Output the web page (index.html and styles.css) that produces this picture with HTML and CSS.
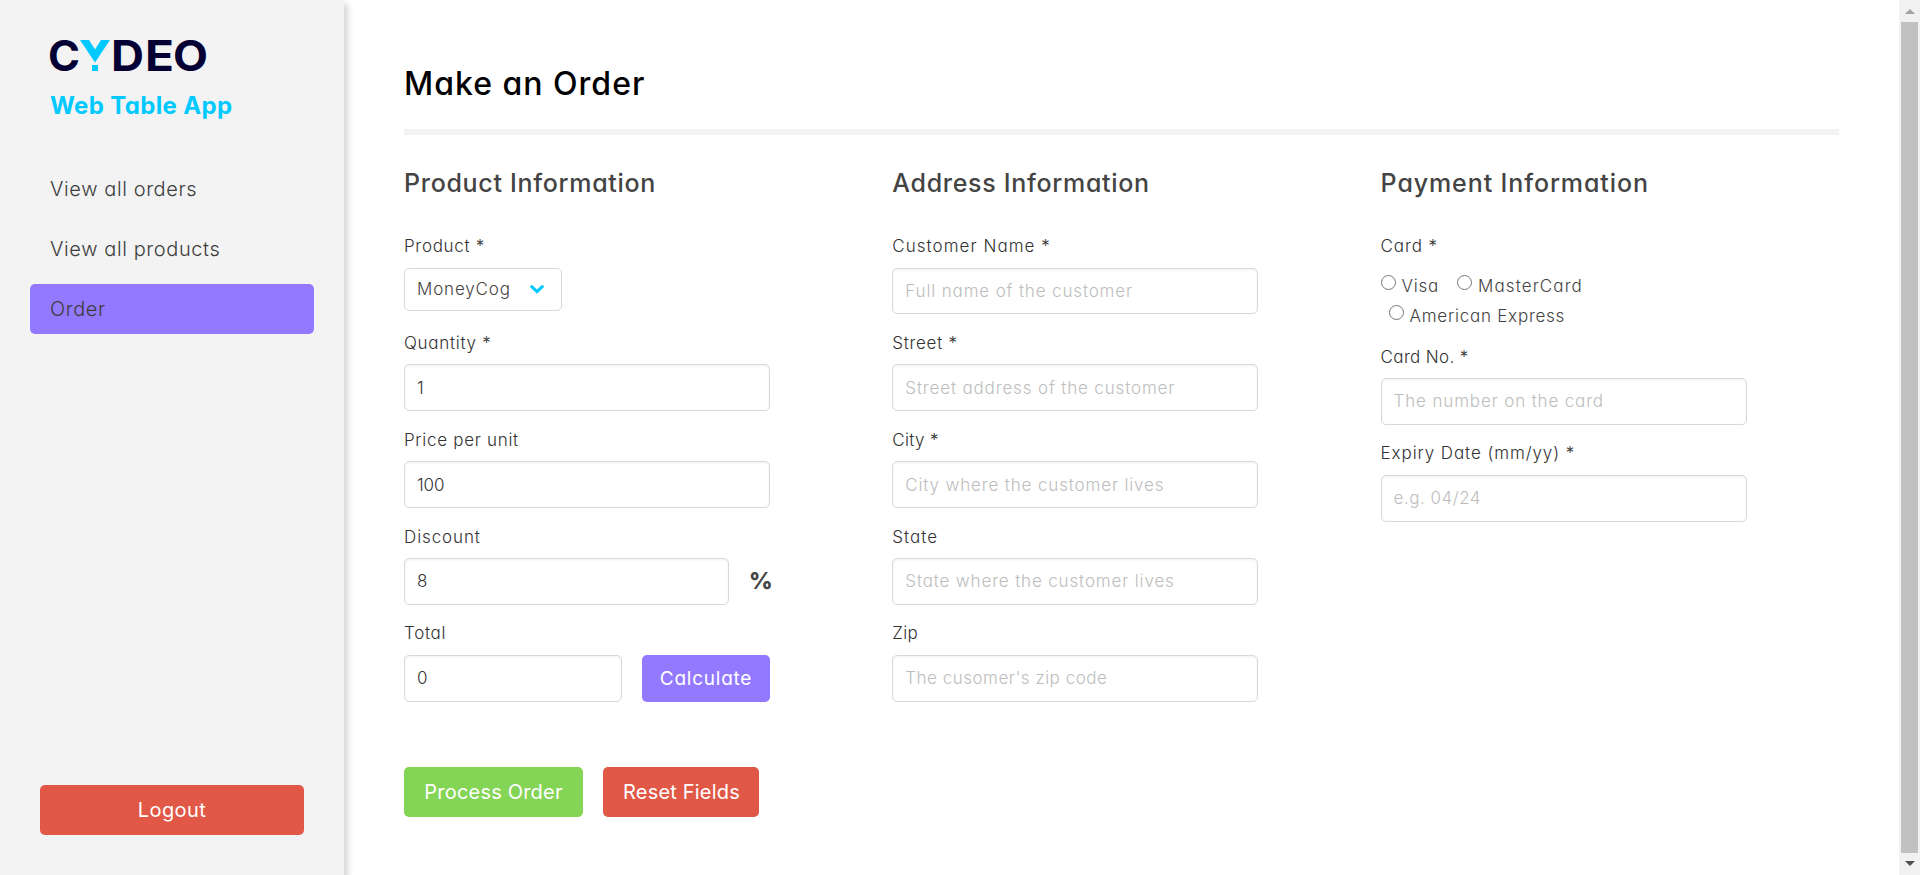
FILE: index.html
```
<!DOCTYPE html>
<html lang="en">
<head>
<meta charset="utf-8">
<title>Web Table App</title>
<link rel="stylesheet" href="styles.css">
</head>
<body>
<div class="app">
  <aside class="sidebar">
    <svg class="logo" viewBox="0 0 157 31" aria-label="Cydeo">
      <g class="logo-text">
        <text x="-2" y="30.5" textLength="32" lengthAdjust="spacingAndGlyphs">C</text>
        <text x="61" y="30.5" textLength="33" lengthAdjust="spacingAndGlyphs">D</text>
        <text x="95" y="30.5" textLength="29" lengthAdjust="spacingAndGlyphs">E</text>
        <text x="123" y="30.5" textLength="35" lengthAdjust="spacingAndGlyphs">O</text>
      </g>
      <g class="logo-mark">
        <path d="M30 0h9l6 9.500 6-9.500h9L45 22.500z"/>
        <rect x="42" y="25" width="6" height="6"/>
      </g>
    </svg>
    <p class="subtitle">Web Table App</p>
    <nav class="menu">
      <a class="menu-link">View all orders</a>
      <a class="menu-link">View all products</a>
      <a class="menu-link active">Order</a>
    </nav>
    <button class="button danger logout">Logout</button>
  </aside>

  <main class="main">
    <h1 class="title">Make an Order</h1>
    <div class="columns">
      <section class="column">
        <h2 class="heading">Product Information</h2>
        <div class="field"><label class="label">Product *</label>
          <div class="select"><span>MoneyCog</span><svg class="chevron" viewBox="0 0 14 9"><path d="M1.700 1.700L7 6.700l5.300-5"/></svg></div></div>
        <div class="field"><label class="label">Quantity *</label><input class="input number" value="1"></div>
        <div class="field"><label class="label">Price per unit</label><input class="input number" value="100"></div>
        <div class="field"><label class="label snug">Discount</label>
          <div class="row"><input class="input number" value="8"><strong class="percent">%</strong></div></div>
        <div class="field"><label class="label">Total</label>
          <div class="row"><input class="input number" value="0"><button class="button calculate">Calculate</button></div></div>
      </section>

      <section class="column">
        <h2 class="heading">Address Information</h2>
        <div class="field"><label class="label wide">Customer Name *</label><input class="input" placeholder="Full name of the customer"></div>
        <div class="field"><label class="label">Street *</label><input class="input" placeholder="Street address of the customer"></div>
        <div class="field"><label class="label tight">City *</label><input class="input" placeholder="City where the customer lives"></div>
        <div class="field"><label class="label wide">State</label><input class="input" placeholder="State where the customer lives"></div>
        <div class="field"><label class="label tight">Zip</label><input class="input tight" placeholder="The cusomer's zip code"></div>
      </section>

      <section class="column">
        <h2 class="heading payment">Payment Information</h2>
        <div class="cards"><label class="label snug">Card *</label>
          <div class="options">
            <label class="option"><input type="radio" class="radio" name="card">Visa</label>
            <label class="option mastercard"><input type="radio" class="radio" name="card">MasterCard</label>
            <label class="option amex"><input type="radio" class="radio" name="card">American Express</label>
          </div></div>
        <div class="field"><label class="label tight">Card No. *</label><input class="input" placeholder="The number on the card"></div>
        <div class="field"><label class="label snug">Expiry Date (mm/yy) *</label><input class="input tight" placeholder="e.g. 04/24"></div>
      </section>
    </div>
    <div class="actions">
      <button class="button success">Process Order</button>
      <button class="button danger reset">Reset Fields</button>
    </div>
  </main>

  <div class="scrollbar">
    <svg class="arrow up" viewBox="0 0 10 5"><path d="M0 5L5 0l5 5z"/></svg>
    <div class="thumb"></div>
    <svg class="arrow down" viewBox="0 0 10 5"><path d="M0 0h10L5 5z"/></svg>
  </div>
</div>
</body>
</html>
```
FILE: styles.css
```
* { box-sizing: border-box; margin: 0; }

body {
  background: #fff;
  color: #444;
  font-family: Inter, "Open Sans", sans-serif;
  font-size: 17px;
  font-weight: 300;
  font-feature-settings: "cv11";
  overflow: hidden;
}

input, button { font: inherit; font-feature-settings: inherit; color: inherit; }

.app { display: flex; height: 875px; }

/* Sidebar */
.sidebar {
  display: flex;
  flex-direction: column;
  width: 344px;
  padding: 40px 30px;
  background: #f3f3f3;
  box-shadow: 4px 4px 6px rgba(0, 0, 0, .16);
}
.logo { width: 157px; height: 31px; margin-left: 20px; overflow: visible; }
.logo-text { fill: #040033; font-size: 42px; font-weight: 750; }
.logo-mark { fill: #00c9ff; }
.subtitle {
  margin: 17px 0 0 20px;
  color: #00c9ff;
  font-size: 24px;
  font-weight: 750;
  line-height: 36px;
  letter-spacing: .35px;
}
.menu { display: flex; flex-direction: column; gap: 10px; margin-top: 40px; }
.menu-link {
  height: 50px;
  padding: 0 20px;
  border-radius: 5px;
  color: #3d3d3d;
  font-size: 20px;
  line-height: 50px;
  letter-spacing: .6px;
}
.menu-link.active { background: #9379ff; }

/* Buttons */
.button {
  height: 50px;
  padding: 0 20px;
  border: 0;
  border-radius: 5px;
  color: #fff;
  font-size: 20px;
  font-weight: 400;
  line-height: 50px;
  letter-spacing: .2px;
  white-space: nowrap;
}
.danger { background: #e15847; }
.success { width: 179px; background: #84d456; }
.reset { width: 156px; }
.logout { margin: auto 10px 0; letter-spacing: .4px; }
.calculate {
  flex: none;
  width: 128px;
  height: auto;
  padding: 0;
  background: #9379ff;
  font-size: 19px;
  line-height: 45px;
  letter-spacing: .75px;
}

/* Main */
.main { flex: 1; padding: 60px 60px 0; }
.title {
  padding-bottom: 21px;
  border-bottom: 6px solid #f3f3f3;
  color: #000;
  font-size: 32px;
  font-weight: 450;
  line-height: 48px;
  letter-spacing: 1px;
}
.columns { display: grid; grid-template-columns: repeat(3, 366px); gap: 122.3px; margin-top: 29px; }
.heading {
  margin-bottom: 15.5px;
  font-size: 25px;
  font-weight: 450;
  line-height: 38px;
  letter-spacing: .7px;
}
.heading.payment { letter-spacing: .9px; }
.field { height: 96.85px; }
.label {
  display: block;
  height: 50px;
  padding-top: 16.5px;
  color: #333;
  line-height: 24px;
  letter-spacing: .7px;
}
.label.tight { letter-spacing: .35px; }
.label.snug { letter-spacing: .9px; }
.label.wide { letter-spacing: 1.05px; }
.input, .select {
  display: block;
  width: 100%;
  height: 46.85px;
  padding: 0 12px;
  border: 1px solid #d9d9d9;
  border-radius: 5px;
  background: #fff;
  box-shadow: inset 0 1px 3px rgba(0, 0, 0, .06);
  letter-spacing: .85px;
}
.input.tight { letter-spacing: .5px; }
.input.number { color: #333; letter-spacing: -.1px; }
.input::placeholder { color: #bdbdbd; opacity: 1; }
.select {
  display: flex;
  align-items: center;
  justify-content: space-between;
  width: 158px;
  height: 43px;
  padding: 0 17px 0 12px;
  box-shadow: none;
}
.chevron { width: 14px; height: 9px; fill: none; stroke: #00c9ff; stroke-width: 3; stroke-linecap: round; }
.row { display: flex; gap: 20px; }
.row .input { flex: 1; min-width: 0; }
.percent { width: 21px; font-size: 23px; font-weight: 800; line-height: 47px; }

/* Card choice */
.options { display: flex; flex-wrap: wrap; gap: 0 18px; height: 57.5px; margin-top: 3px; align-content: flex-start; }
.option { display: flex; align-items: flex-start; gap: 6px; height: 30px; line-height: 30px; letter-spacing: .75px; }
.radio { width: 15px; height: 15px; margin: 4px 0 0; }
.mastercard { margin-right: 100px; letter-spacing: 1.1px; }
.amex { margin-left: 8px; }

.actions { display: flex; gap: 20px; margin-top: 65px; }

/* Scrollbar */
.scrollbar {
  display: flex;
  flex-direction: column;
  align-items: center;
  justify-content: space-between;
  width: 21px;
  padding: 9px 2px;
  background: #f1f1f1;
}
.thumb { width: 17px; height: 831px; background: #c1c1c1; }
.arrow { width: 10px; height: 5px; }
.up { fill: #a3a3a3; }
.down { fill: #505050; }
```
